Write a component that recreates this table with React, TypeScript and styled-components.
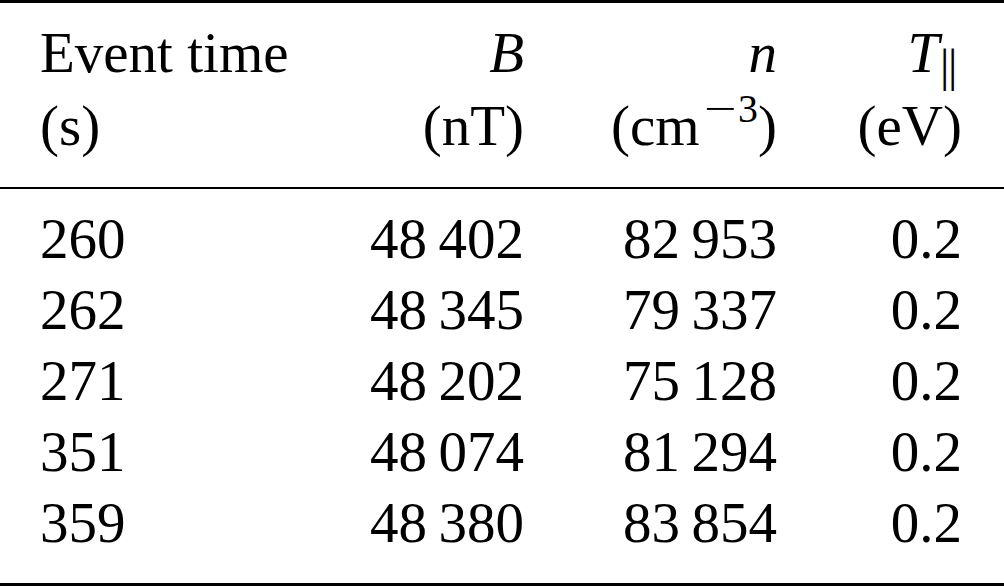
import React from "react";
import styled, { createGlobalStyle } from "styled-components";

const Global = createGlobalStyle`
  html, body { margin: 0; padding: 0; background: #fff; }
  body { font-family: "Liberation Serif", "Times New Roman", serif; color: #000; }
`;

const Page = styled.div`
  width: 1004px;
  height: 586px;
  display: flex;
  flex-direction: column;
  background: #fff;
  overflow: hidden;
`;

const Rule = styled.div<{ $w: number }>`
  height: ${(p) => p.$w}px;
  background: #000;
  flex: none;
`;

const Grid = styled.div<{ $lh: number; $pt: number; $pb: number }>`
  display: grid;
  grid-template-columns: 250px 234px 253px 185px;
  padding: ${(p) => p.$pt}px 42px ${(p) => p.$pb}px 40px;
  font-size: 57px;
  line-height: ${(p) => p.$lh}px;
`;

const Cell = styled.div<{ $right?: boolean }>`
  text-align: ${(p) => (p.$right ? "right" : "left")};
  white-space: nowrap;
`;

const Line = styled.div``;

const Var = styled.i`
  font-style: italic;
`;

const Sup = styled.sup`
  font-size: 0.7em;
  line-height: 0;
  vertical-align: 23px;
  margin-left: 3px;
`;

const Minus = styled.span`
  display: inline-block;
  transform: scaleX(1.45);
  margin: 0 7px 0 6px;
`;

const Sub = styled.sub`
  font-size: 0.82em;
  line-height: 0;
  vertical-align: -0.2em;
  letter-spacing: -0.03em;
  margin-left: 1px;
  margin-right: 6px;
`;

const rows = [
  ["260", "48\u2009402", "82\u2009953", "0.2"],
  ["262", "48\u2009345", "79\u2009337", "0.2"],
  ["271", "48\u2009202", "75\u2009128", "0.2"],
  ["351", "48\u2009074", "81\u2009294", "0.2"],
  ["359", "48\u2009380", "83\u2009854", "0.2"],
];

export default function App() {
  return (
    <Page>
      <Global />
      <Rule $w={3} />
      <Grid $lh={73} $pt={13} $pb={25}>
        <Cell>
          <Line>Event time</Line>
          <Line>(s)</Line>
        </Cell>
        <Cell $right>
          <Line>
            <Var>B</Var>
          </Line>
          <Line>(nT)</Line>
        </Cell>
        <Cell $right>
          <Line>
            <Var>n</Var>
          </Line>
          <Line>
            (cm
            <Sup>
              <Minus>−</Minus>3
            </Sup>
            )
          </Line>
        </Cell>
        <Cell $right>
          <Line>
            <Var>T</Var>
            <Sub>||</Sub>
          </Line>
          <Line>(eV)</Line>
        </Cell>
      </Grid>
      <Rule $w={2} />
      <Grid $lh={71} $pt={14} $pb={25}>
        {rows.map((r) =>
          r.map((v, i) => (
            <Cell key={r[0] + i} $right={i > 0}>
              {v}
            </Cell>
          ))
        )}
      </Grid>
      <Rule $w={3} />
    </Page>
  );
}
